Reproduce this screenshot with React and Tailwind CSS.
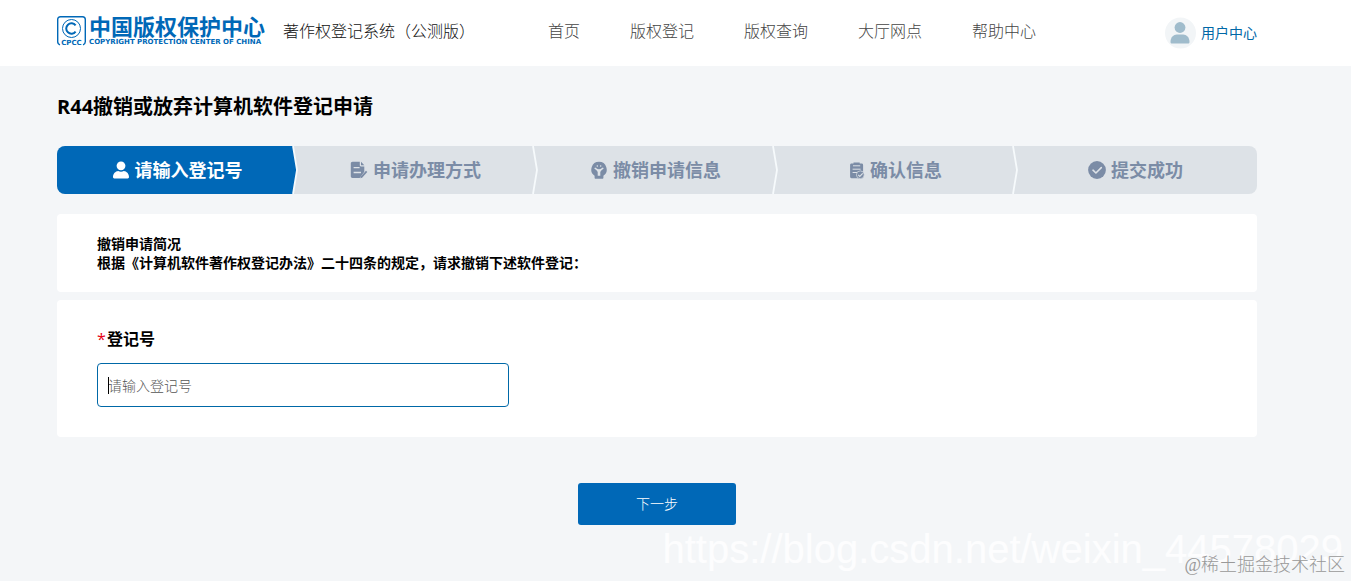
const NAV = ['首页', '版权登记', '版权查询', '大厅网点', '帮助中心'];

function UserIcon() {
  return (
    <svg viewBox="0 0 18 18" className="size-[18px] shrink-0" fill="currentColor" aria-hidden="true">
      <circle cx="9" cy="4.800" r="4.400" />
      <path d="M1 16c0-3.700 2.400-5.700 5.200-6.100.8.500 1.800.8 2.800.8s2-.3 2.800-.8c2.800.4 5.200 2.400 5.200 6.100 0 .9-.5 1.400-1.300 1.400H2.300c-.8 0-1.300-.5-1.300-1.400z" />
    </svg>
  );
}

function FormEditIcon() {
  return (
    <svg viewBox="0 0 18 18" className="size-[18px] shrink-0" fill="currentColor" aria-hidden="true">
      <path
        fillRule="evenodd"
        d="M2.500.8h7.300v3.500c0 .7.500 1.200 1.200 1.200h3.300v5.300L9.700 16.900H2.500c-1 0-1.700-.7-1.700-1.700V2.500C.8 1.500 1.500.8 2.500.8zM3.600 6v1.300h6V6h-6zm0 4.800v1.500h7.400v-1.500H3.600z"
      />
      <path d="M11 .8 14.300 4.300H11z" />
      <path d="M16 9.800l1.300 1.100-5.200 5.800-1.800.6.400-1.900z" />
    </svg>
  );
}

function BulbIcon() {
  return (
    <svg viewBox="0 0 18 18" className="size-[18px] shrink-0" fill="currentColor" aria-hidden="true">
      <path d="M9 .8a7.700 7.700 0 0 1 4.400 14v2c0 .6-.4 1-1 1H5.600c-.6 0-1-.4-1-1v-2A7.700 7.700 0 0 1 9 .8z" />
      <path fill="none" stroke="#dde2e7" strokeWidth="1.500" strokeLinecap="round" d="M5.200 7.300 9 9.800l3.800-2.500M7.300 5h.1M10.600 5h.1" />
      <path fill="#dde2e7" d="M6 8.200h6l-1.700 2.800v3.800H7.700v-3.800z" />
    </svg>
  );
}

function ClipboardIcon() {
  return (
    <svg viewBox="0 0 16 18" className="h-[18px] w-4 shrink-0" fill="currentColor" aria-hidden="true">
      <path d="M2.500 2.600H4.500V1.400h6.200v1.200h2c.8 0 1.400.6 1.400 1.400v11.800c0 .8-.6 1.400-1.400 1.400H2.500c-.8 0-1.400-.6-1.400-1.400V4c0-.8.600-1.400 1.400-1.400z" />
      <path fill="none" stroke="#dde2e7" strokeWidth="1" d="M4 4.800h7.200M3.600 8.200h8M3.600 11.500h4.600" />
      <circle cx="11.300" cy="13.800" r="3.900" stroke="#dde2e7" strokeWidth=".7" />
      <path fill="none" stroke="#dde2e7" strokeWidth="1.200" d="m9.200 13.800 1.600 1.600 2.900-3" />
    </svg>
  );
}

function CheckIcon() {
  return (
    <svg viewBox="0 0 18 18" className="size-[18px] shrink-0" fill="currentColor" aria-hidden="true">
      <circle cx="9" cy="9" r="8.900" />
      <path fill="none" stroke="#dde2e7" strokeWidth="1.600" strokeLinecap="round" strokeLinejoin="round" d="m5 9.200 2.900 2.800 5.400-5.400" />
    </svg>
  );
}

const STEPS = [
  { label: '请输入登记号', Icon: UserIcon },
  { label: '申请办理方式', Icon: FormEditIcon },
  { label: '撤销申请信息', Icon: BulbIcon },
  { label: '确认信息', Icon: ClipboardIcon },
  { label: '提交成功', Icon: CheckIcon },
];

function Logo() {
  return (
    <a href="#" className="flex items-center gap-[3px] text-[#0068b7]">
      <svg viewBox="0 0 29 30" className="h-[30px] w-[29px] shrink-0" aria-hidden="true">
        <path fill="none" stroke="currentColor" strokeWidth="1.400" d="M3 28.800C1.400 28.300.7 27.300.7 25.800V3.500C.7 1.700 1.700.7 3.500.7h22c1.800 0 2.800 1 2.800 2.800v22.300c0 1.500-.7 2.500-2.300 3" />
        <circle cx="14.500" cy="12.500" r="9" fill="none" stroke="currentColor" strokeWidth="1" />
        <path fill="none" stroke="currentColor" strokeWidth="2" d="M18.600 9.400a5.200 5.200 0 1 0 0 6.200" />
        <text x="14.500" y="29" textAnchor="middle" fontSize="7" fontWeight="700" fontFamily="DejaVu Sans, sans-serif" fill="currentColor">CPCC</text>
      </svg>
      <span className="flex flex-col">
        <span className="text-[22px] leading-[22px] font-bold whitespace-nowrap">中国版权保护中心</span>
        <span className="font-['DejaVu_Sans',sans-serif] text-[7px] leading-[10px] font-bold whitespace-nowrap">
          COPYRIGHT PROTECTION CENTER OF CHINA
        </span>
      </span>
    </a>
  );
}

function Header() {
  return (
    <header className="flex h-[66px] items-center bg-white pr-[94px] pb-1 pl-[57px]">
      <Logo />
      <span className="ml-[18px] text-base font-light whitespace-nowrap text-[#111]">著作权登记系统（公测版）</span>
      <nav className="ml-[73px] flex gap-[50px] text-base font-light text-[#444]">
        {NAV.map((item) => (
          <a key={item} href="#" className="whitespace-nowrap">
            {item}
          </a>
        ))}
      </nav>
      <a href="#" className="ml-auto flex items-center gap-1 pt-1 text-sm text-[#0068a7]">
        <svg viewBox="0 0 32 32" className="size-8" aria-hidden="true">
          <circle cx="15.500" cy="16" r="15.500" fill="#f2f5f7" />
          <circle cx="15" cy="10.500" r="5.400" fill="#a0bccc" />
          <path fill="#a0bccc" d="M5.500 25c0-4.600 3-7.500 6.300-7.500h6.400c3.300 0 6.300 2.900 6.300 7.500 0 1-.6 1.500-1.500 1.500H7c-.9 0-1.500-.5-1.500-1.500z" />
        </svg>
        <span className="whitespace-nowrap">用户中心</span>
      </a>
    </header>
  );
}

function Steps() {
  return (
    <ol className="mt-6 flex h-12 overflow-hidden rounded-lg bg-[#dde2e7] text-lg font-bold">
      {STEPS.map(({ label, Icon }, i) => (
        <li
          key={label}
          className={
            i === 0
              ? 'relative flex w-1/5 items-center justify-center gap-[5px] bg-[#0068b7] text-white'
              : 'relative flex w-1/5 items-center justify-center gap-[5px] pr-[3px] text-[#7b8ca6]'
          }
        >
          <Icon />
          <span className="whitespace-nowrap">{label}</span>
          {i < STEPS.length - 1 && (
            <svg viewBox="0 0 6 48" className="absolute top-0 right-[-1px] h-12 w-1.5" aria-hidden="true">
              <path fill="#dde2e7" d="M1 0l4 24-4 24h5V0z" />
              <path fill="none" stroke="#f6fafc" strokeWidth="1.800" d="M1 0l4 24-4 24" />
            </svg>
          )}
        </li>
      ))}
    </ol>
  );
}

export default function App() {
  return (
    <div className="relative min-h-screen bg-[#f4f6f8] font-['Open_Sans','Noto_Sans_CJK_SC',sans-serif] text-black">
      <Header />
      <main className="pr-[94px] pl-[57px]">
        <h1 className="pt-[26px] text-xl leading-[30px] font-bold">R44撤销或放弃计算机软件登记申请</h1>
        <Steps />
        <section className="mt-5 rounded bg-white px-10 py-5 text-sm leading-[19px] font-bold">
          <h2>撤销申请简况</h2>
          <p>根据《计算机软件著作权登记办法》二十四条的规定，请求撤销下述软件登记：</p>
        </section>
        <form id="apply" className="mt-2 rounded bg-white px-10 pt-7 pb-[30px]">
          <label htmlFor="regNo" className="flex text-base leading-[23px] font-bold">
            <span className="w-2.5 font-normal text-[#e60012]">*</span>
            登记号
          </label>
          <div className="relative mt-3 w-full max-w-[412px]">
            <input
              id="regNo"
              type="text"
              placeholder="请输入登记号"
              className="block h-11 w-full rounded border border-[#0068a7] bg-white px-2.5 text-sm font-light placeholder-[#555] outline-none"
            />
            <span className="absolute top-3.5 left-[11px] h-[17px] w-px bg-black" />
          </div>
        </form>
        <div className="mt-[46px] flex justify-center">
          <button type="submit" form="apply" className="h-[42px] w-[158px] rounded-[3px] bg-[#0068b7] text-sm font-light text-white">
            下一步
          </button>
        </div>
      </main>
      <span className="pointer-events-none absolute right-2 bottom-1.5 font-['Liberation_Sans',sans-serif] text-[40px] leading-[52px] whitespace-nowrap text-white/80">
        https://blog.csdn.net/weixin_44578029
      </span>
      <span className="pointer-events-none absolute right-1.5 bottom-1 font-['Liberation_Serif','Noto_Sans_CJK_SC',serif] text-lg leading-6 font-light whitespace-nowrap text-[#999]">
        @稀土掘金技术社区
      </span>
    </div>
  );
}
